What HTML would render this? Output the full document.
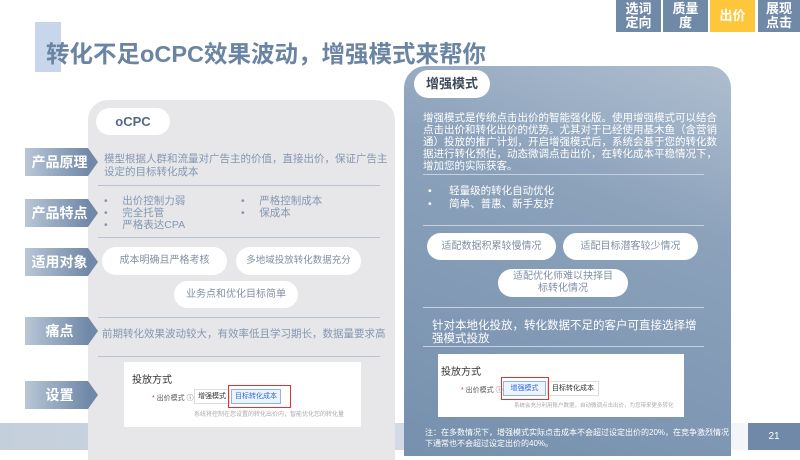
<!DOCTYPE html>
<html><head><meta charset="utf-8"><style>
*{margin:0;padding:0;box-sizing:border-box}
body{width:800px;height:450px;position:relative;overflow:hidden;background:#fff;font-family:"Liberation Sans","Noto Sans CJK SC",sans-serif}
.a{position:absolute}
.tab{position:absolute;top:0;height:32px;background:#7089a6;color:#fff;font-weight:bold;font-size:13px;line-height:14px;text-align:center;display:flex;align-items:center;justify-content:center}
.lbl{position:absolute;left:25px;width:63px;height:28px;background:linear-gradient(90deg,#b9c6d6,#7189a8);color:#fff;font-weight:bold;font-size:14px;display:flex;align-items:center;justify-content:center;padding-left:6px}
.lbl:after{content:"";position:absolute;right:-10px;top:0;border-left:10px solid #7189a8;border-top:14px solid transparent;border-bottom:14px solid transparent}
.line{position:absolute;height:1px;background:#b8c4d4}
.pill{position:absolute;background:#fff;border-radius:14px;color:#8090a6;font-size:10px;display:flex;align-items:center;justify-content:center;text-align:center;line-height:12px}
.t{color:#8497b0;font-size:10.5px;line-height:13px}
.card{position:absolute;background:#fff}
.wt{color:#fff;font-size:10.5px;line-height:12px}
</style></head><body>
<div class="a" style="left:0;top:423px;width:748px;height:27px;background:linear-gradient(90deg,#c4cfdc,#d4dce6 60%,#f4f6f8)"></div>
<div class="a" style="left:748px;top:423px;width:52px;height:27px;background:#7089a8;color:#fff;font-size:10px;text-align:center;line-height:27px">21</div>

<div class="tab" style="left:616px;width:45px">选词<br>定向</div>
<div class="tab" style="left:663px;width:45px">质量<br>度</div>
<div class="tab" style="left:710px;width:45px;background:#fec63b">出价</div>
<div class="tab" style="left:758px;width:42px">展现<br>点击</div>

<div class="a" style="left:35px;top:22px;width:26px;height:50px;background:#c8d6ec"></div>
<div class="a" style="left:46px;top:35px;font-size:23.5px;font-weight:bold;color:#6a84a3">转化不足oCPC效果波动，增强模式来帮你</div>

<!-- left panel -->
<div class="a" style="left:88px;top:100px;width:307px;height:360px;background:#e7e7e9;border-radius:20px 20px 0 0"></div>
<div class="pill" style="left:96px;top:108px;width:74px;height:27px;color:#556a85;font-weight:bold;font-size:13px">oCPC</div>
<div class="lbl" style="top:148px">产品原理</div>
<div class="lbl" style="top:199px">产品特点</div>
<div class="lbl" style="top:248px">适用对象</div>
<div class="lbl" style="top:317px">痛点</div>
<div class="lbl" style="top:381px">设置</div>
<div class="a t" style="left:104px;top:153px;width:292px">模型根据人群和流量对广告主的价值，直接出价，保证广告主设定的目标转化成本</div>
<div class="line" style="left:98px;top:185px;width:282px"></div>
<div class="a t" style="left:104px;top:195px;line-height:12px">•&nbsp;&nbsp;&nbsp;&nbsp;&nbsp;出价控制力弱<br>•&nbsp;&nbsp;&nbsp;&nbsp;&nbsp;完全托管<br>•&nbsp;&nbsp;&nbsp;&nbsp;&nbsp;严格表达CPA</div>
<div class="a t" style="left:241px;top:195px;line-height:12px">•&nbsp;&nbsp;&nbsp;&nbsp;&nbsp;严格控制成本<br>•&nbsp;&nbsp;&nbsp;&nbsp;&nbsp;保成本</div>
<div class="line" style="left:98px;top:237px;width:282px"></div>
<div class="pill" style="left:102px;top:247px;width:125px;height:28px">成本明确且严格考核</div>
<div class="pill" style="left:236px;top:247px;width:125px;height:28px;font-size:9.5px">多地域投放转化数据充分</div>
<div class="pill" style="left:174px;top:281px;width:124px;height:27px">业务点和优化目标简单</div>
<div class="line" style="left:98px;top:317px;width:282px"></div>
<div class="a t" style="left:102px;top:328px;font-size:10.5px;white-space:nowrap">前期转化效果波动较大，有效率低且学习期长，数据量要求高</div>
<div class="line" style="left:98px;top:356px;width:282px"></div>
<div class="card" style="left:124px;top:362px;width:237px;height:65px">
 <div class="a" style="left:8px;top:9px;font-size:10px;color:#333">投放方式</div>
 <div class="a" style="left:28px;top:31px;font-size:7px;color:#555"><span style="color:#e33">*</span> 出价模式 ⓘ</div>
 <div class="a" style="left:70px;top:27px;width:36px;height:15px;border:1px solid #ddd;font-size:7px;color:#333;text-align:center;line-height:13px">增强模式</div>
 <div class="a" style="left:107px;top:27px;width:50px;height:15px;border:1px solid #8ab4f0;background:#eef4ff;font-size:7px;color:#2b6ad8;text-align:center;line-height:13px">目标转化成本</div>
 <div class="a" style="left:104px;top:23px;width:63px;height:23px;border:1.5px solid #e3312f"></div>
 <div class="a" style="left:70px;top:47px;font-size:6px;color:#aaa;white-space:nowrap">系统将控制在您设置的转化出价内，智能优化您的转化量</div>
</div>

<!-- right panel -->
<div class="a" style="left:404px;top:66px;width:327px;height:390px;border-radius:22px 22px 0 0;background:linear-gradient(200deg,#aebed0 0%,#8ca2bb 35%,#7690ad 100%)"></div>
<div class="pill" style="left:414px;top:70px;width:76px;height:28px;color:#3d4a5a;font-weight:bold;font-size:13px">增强模式</div>
<div class="a wt" style="left:423px;top:112px;width:296px">增强模式是传统点击出价的智能强化版。使用增强模式可以结合点击出价和转化出价的优势。尤其对于已经使用基木鱼（含营销通）投放的推广计划，开启增强模式后，系统会基于您的转化数据进行转化预估，动态微调点击出价，在转化成本平稳情况下，增加您的实际获客。</div>
<div class="line" style="left:423px;top:174px;width:281px;background:#c5d1de"></div>
<div class="a wt" style="left:428px;top:185px;line-height:13px">•&nbsp;&nbsp;&nbsp;&nbsp;&nbsp;&nbsp;轻量级的转化自动优化<br>•&nbsp;&nbsp;&nbsp;&nbsp;&nbsp;&nbsp;简单、普惠、新手友好</div>
<div class="line" style="left:423px;top:225px;width:281px;background:#c5d1de"></div>
<div class="pill" style="left:427px;top:233px;width:129px;height:27px">适配数据积累较慢情况</div>
<div class="pill" style="left:563px;top:233px;width:135px;height:27px">适配目标潜客较少情况</div>
<div class="pill" style="left:498px;top:269px;width:130px;height:28px">适配优化师难以抉择目<br>标转化情况</div>
<div class="line" style="left:423px;top:307px;width:281px;background:#c5d1de"></div>
<div class="a wt" style="left:432px;top:320px;width:272px;font-size:11.5px;line-height:13px">针对本地化投放，转化数据不足的客户可直接选择增强模式投放</div>
<div class="line" style="left:423px;top:346px;width:281px;background:#c5d1de"></div>
<div class="card" style="left:438px;top:354px;width:246px;height:63px">
 <div class="a" style="left:3px;top:9px;font-size:10px;color:#333">投放方式</div>
 <div class="a" style="left:23px;top:31px;font-size:7px;color:#555"><span style="color:#e33">*</span> 出价模式 ⓘ</div>
 <div class="a" style="left:65px;top:27px;width:43px;height:15px;border:1px solid #8ab4f0;background:#eef4ff;font-size:7px;color:#2b6ad8;text-align:center;line-height:13px">增强模式</div>
 <div class="a" style="left:109px;top:27px;width:52px;height:15px;border:1px solid #ddd;font-size:7px;color:#333;text-align:center;line-height:13px">目标转化成本</div>
 <div class="a" style="left:63px;top:23px;width:48px;height:23px;border:1.5px solid #e3312f"></div>
 <div class="a" style="left:76px;top:47px;font-size:5.5px;color:#aaa;white-space:nowrap">系统会充分利用账户数据，自动微调点击出价，为您带来更多转化</div>
</div>
<div class="a wt" style="left:425px;top:427px;font-size:8px;line-height:11px;width:305px">注：在多数情况下，增强模式实际点击成本不会超过设定出价的20%，在竞争激烈情况下通常也不会超过设定出价的40%。</div>
</body></html>
